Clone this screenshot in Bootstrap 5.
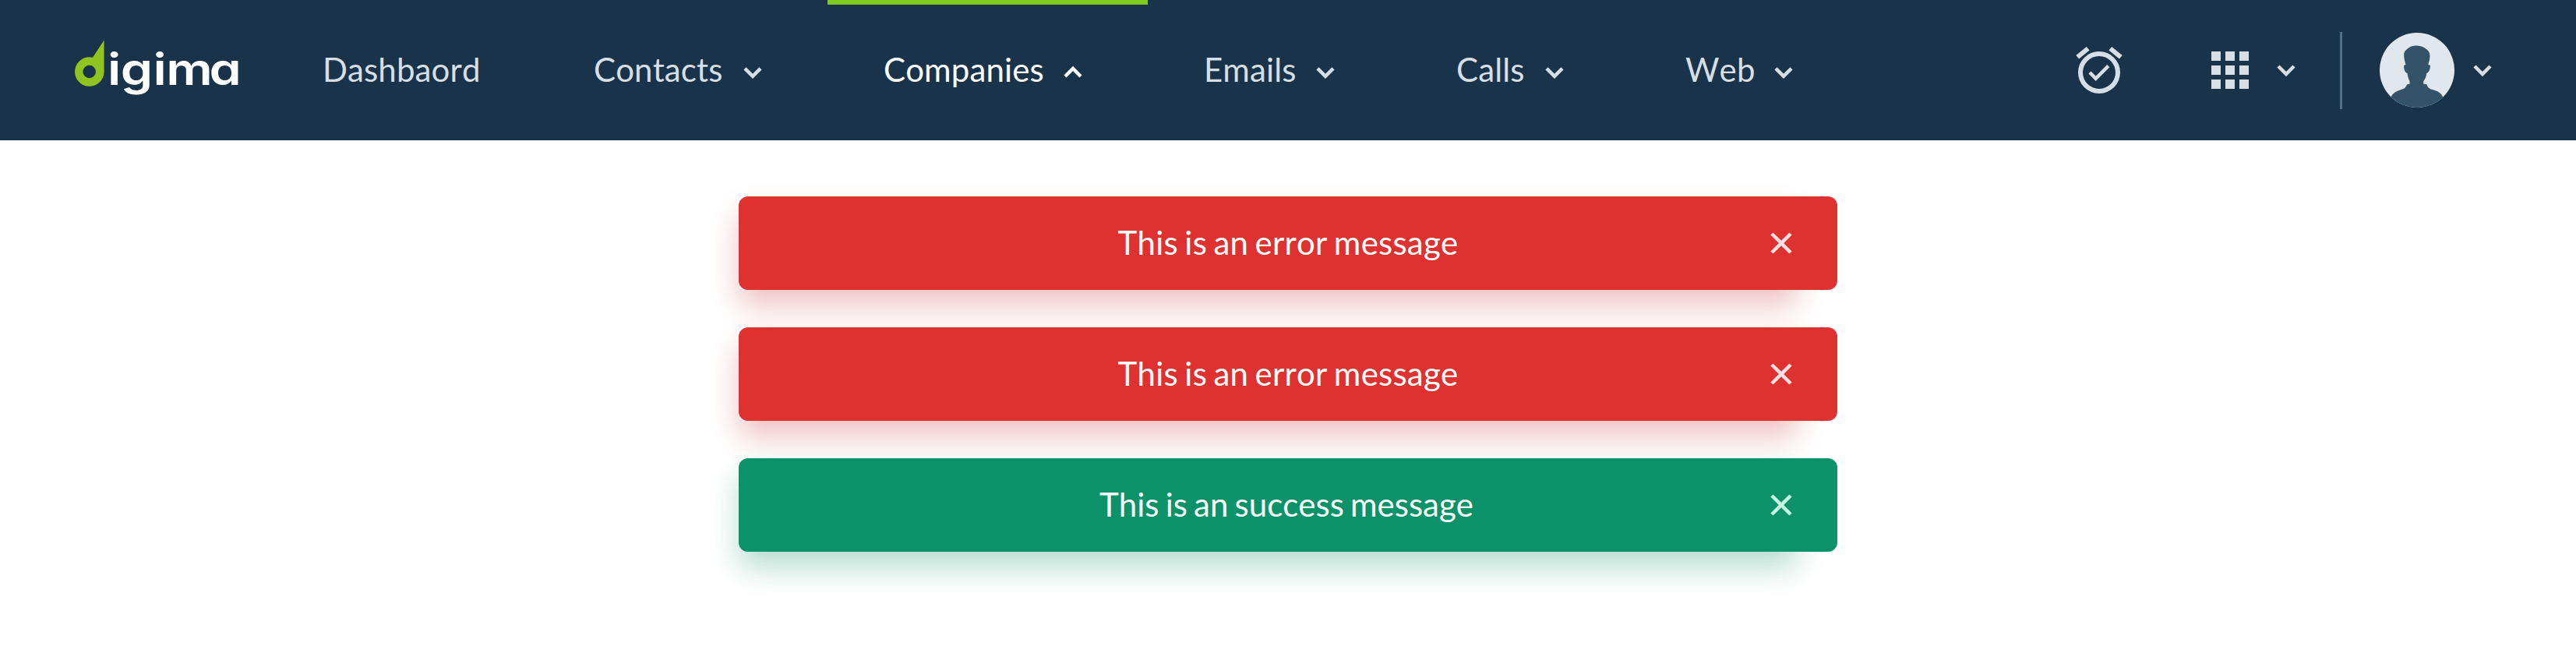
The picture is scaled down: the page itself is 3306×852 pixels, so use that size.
<!DOCTYPE html>
<html lang="en">
<head>
<meta charset="utf-8">
<meta name="viewport" content="width=device-width, initial-scale=1">
<title>Digima</title>
<link href="https://cdn.jsdelivr.net/npm/bootstrap@5.3.0/dist/css/bootstrap.min.css" rel="stylesheet">
<style>
  body { font-family: Lato, "Liberation Sans", sans-serif; font-size: 42px; line-height: 60px; font-kerning: none; word-spacing: -2.6px; background: #fff; }
  .topbar { height: 180px; background: #19344a; padding: 0 96px; }
  .topbar .navbar-brand { width: 246px; margin: 0; padding: 0; font-size: 42px; }
  .topbar .nav-link { height: 180px; padding: 0 72px 2px; color: #d5dfe5; letter-spacing: .12px; border-top: 6px solid transparent; border-bottom: 6px solid transparent; }
  .topbar .nav-link.active { color: #fff; border-top-color: #81ca1f; }
  .w-dashboard { width: 348px; }
  .w-contacts { width: 372px; }
  .w-companies { width: 411px; }
  .w-emails { width: 324px; }
  .w-short { width: 294px; }
  .chev { width: 48px; height: 48px; fill: none; stroke: currentColor; stroke-width: 4.5; flex: none; }
  .nav-link .chev { margin-top: 8px; margin-left: auto; }
  .tools { color: #d5dfe5; }
  .tools .chev { margin-left: 12px; }
  .alarm { margin-right: 96px; }
  .rule { width: 3px; height: 99px; background: #527088; margin: 0 48px 0 45px; }
  .messages { width: 1410px; padding: 72px 0 144px; gap: 48px; isolation: isolate; }
  .messages .alert { height: 120px; border: 0; border-radius: 12px; padding: 0 48px 2px; color: #fff; }
  .messages .alert::before { content: ""; position: absolute; z-index: -1; top: 20px; bottom: -20px; left: 0; right: 51px; border-radius: 12px; background: var(--glow); filter: blur(19px); opacity: .29; }
  .msg-error { background: #e03131; letter-spacing: .22px; --glow: #c92a2e; --close: #ffe0e0; }
  .messages .msg-success { background: #0b9268; padding-right: 52px; --glow: #0b8a63; --close: #c5f7e4; }
  .close-x { position: absolute; right: 48px; top: 36px; width: 48px; height: 48px; padding: 0; border: 0; background: none; color: var(--close); display: flex; }
  .close-x svg { width: 48px; height: 48px; fill: none; stroke: currentColor; stroke-width: 4.5; }
</style>
</head>
<body>
<nav class="navbar topbar d-flex flex-nowrap align-items-center justify-content-start">
  <a class="navbar-brand" href="#">
    <svg class="d-block overflow-visible" width="222" height="84" viewBox="0 0 222 84" aria-label="digima">
      <path fill="#8fc31f" fill-rule="evenodd" d="M37.600 3.600V44A18.800 18.800 0 1 1 23 25.700ZM18.700 35.700A8.300 8.300 0 1 0 18.700 52.300A8.300 8.300 0 1 0 18.700 35.700Z"/>
      <text transform="scale(1.16 1)" y="61" x="36.200 50.600 86.600 101.100 148.800" fill="#fff" font-family="Inter, sans-serif" font-size="57" font-weight="600" style="font-feature-settings:'cv11' 1,'ss07' 0">igima</text>
    </svg>
  </a>
  <ul class="nav flex-nowrap">
    <li class="nav-item w-dashboard"><a class="nav-link d-flex align-items-center" href="#">Dashbaord</a></li>
    <li class="nav-item w-contacts"><a class="nav-link d-flex align-items-center" href="#">Contacts<svg class="chev" viewBox="0 0 48 48"><path d="M14 18.800 24 28.800 34 18.800"/></svg></a></li>
    <li class="nav-item w-companies"><a class="nav-link active d-flex align-items-center" href="#">Companies<svg class="chev" viewBox="0 0 48 48"><path d="M14 29 24 19 34 29"/></svg></a></li>
    <li class="nav-item w-emails"><a class="nav-link d-flex align-items-center" href="#">Emails<svg class="chev" viewBox="0 0 48 48"><path d="M14 18.800 24 28.800 34 18.800"/></svg></a></li>
    <li class="nav-item w-short"><a class="nav-link d-flex align-items-center" href="#">Calls<svg class="chev" viewBox="0 0 48 48"><path d="M14 18.800 24 28.800 34 18.800"/></svg></a></li>
    <li class="nav-item w-short"><a class="nav-link d-flex align-items-center" href="#">Web<svg class="chev" viewBox="0 0 48 48"><path d="M14 18.800 24 28.800 34 18.800"/></svg></a></li>
  </ul>
  <div class="tools d-flex align-items-center ms-auto">
    <svg class="alarm" width="72" height="72" viewBox="0 0 72 72" fill="none" stroke="currentColor" stroke-width="6"><circle cx="36" cy="39" r="24"/><path d="M8.200 19.300 21.700 8.200M50.300 8.200 63.800 19.300"/><path stroke-width="4.500" d="M24 39 31.700 46.800 47.800 30.700"/></svg>
    <svg width="72" height="72" viewBox="0 0 72 72" fill="currentColor"><path d="M12 12h12v12H12zM30 12h12v12H30zM48 12h12v12H48zM12 30h12v12H12zM30 30h12v12H30zM48 30h12v12H48zM12 48h12v12H12zM30 48h12v12H30zM48 48h12v12H48z"/></svg>
    <svg class="chev" viewBox="0 0 48 48"><path d="M14 19 24 29 34 19"/></svg>
    <div class="rule"></div>
    <svg width="96" height="96" viewBox="0 0 96 96"><defs><clipPath id="face"><circle cx="48" cy="48" r="48"/></clipPath></defs><circle cx="48" cy="48" r="48" fill="#e0e8ed"/><path clip-path="url(#face)" fill="#345268" d="M14 83C17 77 23 74 29 72.500C33 71.500 34 69 35 66.500Q35.500 65.700 38.500 65.700V62C36.500 58.500 36 55 35.500 52C32 51 31 46 31.200 42.300Q31.500 41.500 33.500 41C32 36 31 32 31.200 27.500C31.500 24 34.500 21 38 19C41 15.500 52 15.500 57 19C62 22 64.600 25 64.500 30C64.500 34 63 38 62.300 41Q64.800 41 65 42.500C65 46 63.500 51 60.200 52C60 56 58.500 59.500 56.300 62V65.700Q60 65.700 60.500 66.500C61.500 69.500 62.500 71 66 72.500C74 74.500 79 77 81.500 83V96H14Z"/></svg>
    <svg class="chev" viewBox="0 0 48 48"><path d="M14 19 24 29 34 19"/></svg>
  </div>
</nav>
<main class="messages d-flex flex-column mx-auto">
  <div class="alert msg-error m-0 d-flex align-items-center justify-content-center" role="alert">This is an error message<button class="close-x" type="button" aria-label="Close"><svg viewBox="0 0 48 48"><path d="M12 12 36 36M36 12 12 36"/></svg></button></div>
  <div class="alert msg-error m-0 d-flex align-items-center justify-content-center" role="alert">This is an error message<button class="close-x" type="button" aria-label="Close"><svg viewBox="0 0 48 48"><path d="M12 12 36 36M36 12 12 36"/></svg></button></div>
  <div class="alert msg-success m-0 d-flex align-items-center justify-content-center" role="alert">This is an success message<button class="close-x" type="button" aria-label="Close"><svg viewBox="0 0 48 48"><path d="M12 12 36 36M36 12 12 36"/></svg></button></div>
</main>
<script src="https://cdn.jsdelivr.net/npm/bootstrap@5.3.0/dist/js/bootstrap.bundle.min.js"></script>
</body>
</html>
